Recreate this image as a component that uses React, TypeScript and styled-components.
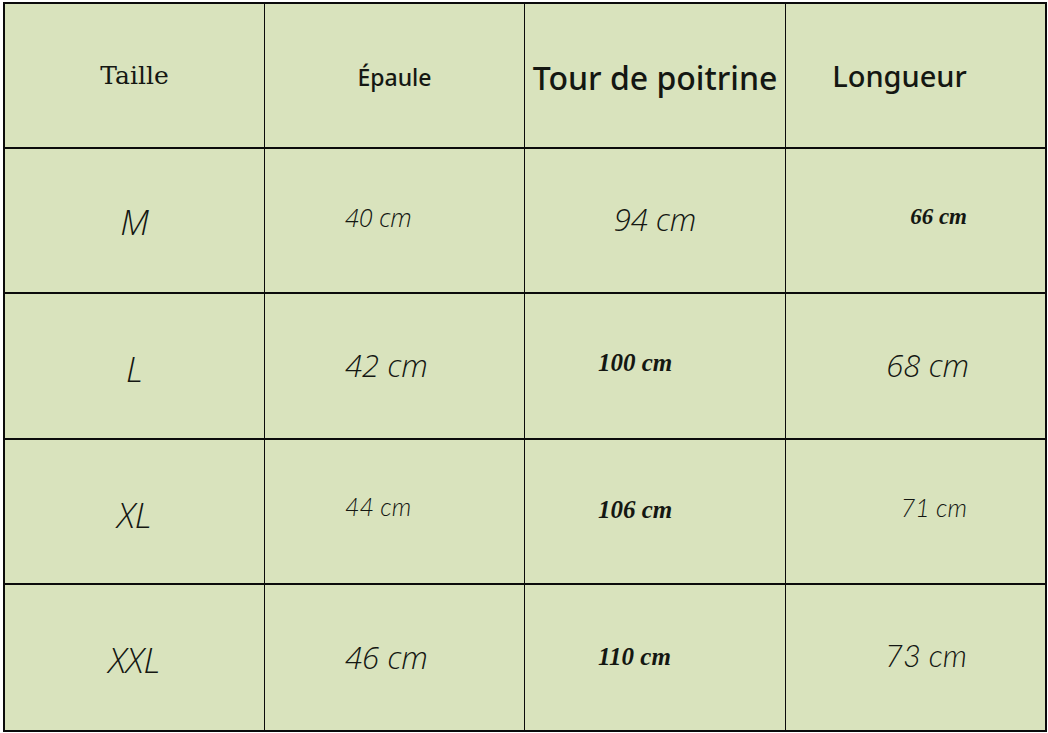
import React from "react";
import styled, { createGlobalStyle, css } from "styled-components";

const Global = createGlobalStyle`
  html, body { margin: 0; padding: 0; background: #ffffff; }
  body { width: 1048px; height: 733px; overflow: hidden; }
`;

type FontKind = "slab" | "sans" | "italic" | "gothic" | "serif";

const fonts: Record<FontKind, ReturnType<typeof css>> = {
  slab: css`
    font-family: "DejaVu Serif", "Liberation Serif", serif;
    font-style: normal;
    font-weight: 400;
  `,
  sans: css`
    font-family: "Noto Sans", "Open Sans", sans-serif;
    font-style: normal;
    font-weight: 500;
  `,
  italic: css`
    font-family: "Open Sans", "Noto Sans", sans-serif;
    font-style: italic;
    font-weight: 300;
  `,
  gothic: css`
    font-family: Lato, "Open Sans", sans-serif;
    font-style: italic;
    font-weight: 300;
  `,
  serif: css`
    font-family: "Liberation Serif", "DejaVu Serif", serif;
    font-style: italic;
    font-weight: 700;
  `,
};

const Sheet = styled.div`
  box-sizing: border-box;
  margin: 2px 0 0 3px;
  width: 1044px;
  height: 730px;
  border: 2px solid #0b0b0b;
  background: #d9e3bd;
  display: grid;
  grid-template-columns: 260px 260px 261px 1fr;
  grid-template-rows: repeat(5, 1fr);
`;

const Cell = styled.div<{
  $align: "start" | "center" | "end";
  $padL: number;
  $padR: number;
  $dy: number;
  $lastCol: boolean;
  $lastRow: boolean;
}>`
  box-sizing: border-box;
  display: flex;
  align-items: center;
  justify-content: ${(p) =>
    p.$align === "start" ? "flex-start" : p.$align === "end" ? "flex-end" : "center"};
  padding-left: ${(p) => p.$padL}px;
  padding-right: ${(p) => p.$padR}px;
  padding-top: ${(p) => (p.$dy > 0 ? p.$dy * 2 : 0)}px;
  padding-bottom: ${(p) => (p.$dy < 0 ? -p.$dy * 2 : 0)}px;
  border-right: ${(p) => (p.$lastCol ? "none" : "1.5px solid #0b0b0b")};
  border-bottom: ${(p) => (p.$lastRow ? "none" : "2px solid #0b0b0b")};
`;

const Label = styled.span<{ $font: FontKind; $size: number }>`
  ${(p) => fonts[p.$font]}
  font-size: ${(p) => p.$size}px;
  line-height: 1;
  color: #141712;
  white-space: nowrap;
`;

type Entry = {
  text: string;
  font: FontKind;
  size: number;
  align?: "start" | "center" | "end";
  padL?: number;
  padR?: number;
  dy?: number;
};

const rows: Entry[][] = [
  [
    { text: "Taille", font: "slab", size: 25, dy: 0 },
    { text: "Épaule", font: "sans", size: 23, dy: 2 },
    { text: "Tour de poitrine", font: "sans", size: 32, dy: 2 },
    { text: "Longueur", font: "sans", size: 29, padR: 32 },
  ],
  [
    { text: "M", font: "italic", size: 35, dy: 1 },
    { text: "40 cm", font: "italic", size: 25, align: "start", padL: 80, dy: -3 },
    { text: "94 cm", font: "italic", size: 31, dy: -1 },
    { text: "66 cm", font: "serif", size: 23, align: "end", padR: 78, dy: -4 },
  ],
  [
    { text: "L", font: "italic", size: 35, dy: 3 },
    { text: "42 cm", font: "italic", size: 31, align: "start", padL: 80 },
    { text: "100 cm", font: "serif", size: 25, align: "start", padL: 73, dy: -3 },
    { text: "68 cm", font: "italic", size: 31, align: "end", padR: 76 },
  ],
  [
    { text: "XL", font: "italic", size: 35, dy: 3 },
    { text: "44 cm", font: "gothic", size: 25, align: "start", padL: 80, dy: -5 },
    { text: "106 cm", font: "serif", size: 25, align: "start", padL: 73, dy: -2 },
    { text: "71 cm", font: "gothic", size: 25, align: "end", padR: 78, dy: -4 },
  ],
  [
    { text: "XXL", font: "italic", size: 35, dy: 2 },
    { text: "46 cm", font: "italic", size: 31, align: "start", padL: 80 },
    { text: "110 cm", font: "serif", size: 25, align: "start", padL: 73, dy: -1 },
    { text: "73 cm", font: "gothic", size: 31, align: "end", padR: 78, dy: -2 },
  ],
];

export default function App() {
  return (
    <>
      <Global />
      <Sheet>
        {rows.map((row, r) =>
          row.map((e, c) => (
            <Cell
              key={`${r}-${c}`}
              $align={e.align ?? "center"}
              $padL={e.padL ?? 0}
              $padR={e.padR ?? 0}
              $dy={e.dy ?? 0}
              $lastCol={c === row.length - 1}
              $lastRow={r === rows.length - 1}
            >
              <Label $font={e.font} $size={e.size}>
                {e.text}
              </Label>
            </Cell>
          ))
        )}
      </Sheet>
    </>
  );
}
